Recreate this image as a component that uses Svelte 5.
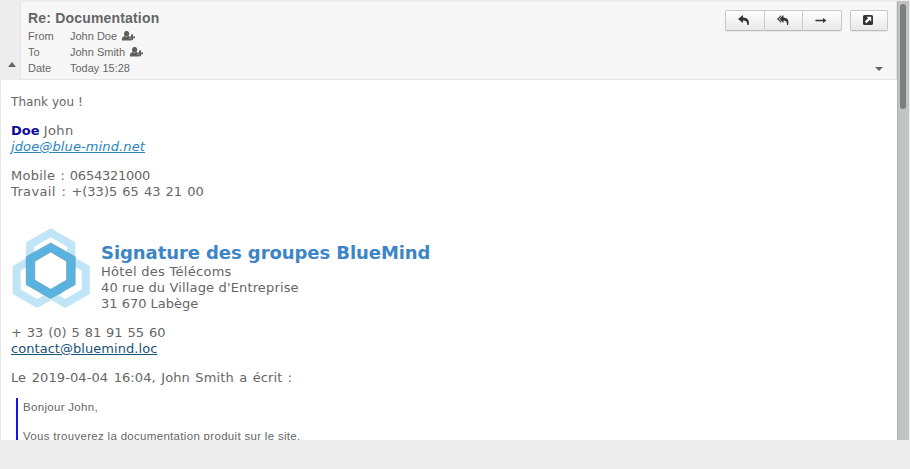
<script>
  const headers = [
    { label: 'From', value: 'John Doe', contact: true },
    { label: 'To', value: 'John Smith', contact: true },
    { label: 'Date', value: 'Today 15:28', contact: false }
  ];
  const arrow = 'M5 0 0 4 5 8V5.6C8 5.5 9.4 6.8 9.3 10H10.6C12 5.5 9.5 2.4 5 2.4Z';
</script>

<div class="app">
  <div class="viewer">
    <main>
      <header>
        <div class="gutter"><svg width="8" height="5" viewBox="0 0 8 5"><path d="M4 0 8 5H0Z" fill="#666" /></svg></div>
        <div class="summary">
          <div class="info">
            <h1>Re: Documentation</h1>
            {#each headers as h}
              <div class="row">
                <span class="label">{h.label}</span><span>{h.value}</span>
                {#if h.contact}
                  <svg class="contact" width="13" height="10" viewBox="0 0 13 10" fill="#5e5e5e">
                    <ellipse cx="4.6" cy="2.7" rx="2.6" ry="2.8" />
                    <path d="M0 9.6V7.5Q0 5.8 2.6 5Q4.5 6.5 6.4 5L7.3 5.3V7.5H9V9.6Z" />
                    <path d="M9.2 3.2H11v2.3h2V7.2h-2v2.1H9.2V7.2H7.3V5.5h1.9Z" />
                  </svg>
                {/if}
              </div>
            {/each}
          </div>
          <div class="side">
            <div class="actions">
              <div class="group">
                <button aria-label="Reply"><svg width="12" height="11" viewBox="0 0 12 11"><path d={arrow} /></svg></button>
                <button aria-label="Reply all"><svg width="12" height="11" viewBox="0 0 12 11"><path d="M6.5 0 2.5 4l4 4V5.6c2.6 0 3.6 1.5 3.5 4.4H11C12.4 5.5 10.5 2.5 6.5 2.4Z" /><path d="M4.2 0 0 4l4.2 4V6.6L1.6 4l2.6-2.6Z" /></svg></button>
                <button aria-label="Forward"><svg width="12" height="11" viewBox="0 0 12 11"><path d="M.5 4.8H8V3l3.5 2.5L8 8V6.2H.5Z" /></svg></button>
              </div>
              <button class="open" aria-label="Open in window"><svg width="10" height="10" viewBox="0 0 10 10"><rect width="10" height="10" rx="1.6" /><path d="M3.6 1.8h4.6v4.6L6.7 4.9 3.4 8.2 1.8 6.6 5.1 3.3Z" fill="#fff" /></svg></button>
            </div>
            <svg class="more" width="8" height="4" viewBox="0 0 8 4"><path d="M0 0H8L4 4Z" fill="#666" /></svg>
          </div>
        </div>
      </header>
      <article>
        <p class="thanks">Thank you !</p>
        <p><b>Doe</b> <span class="name">John</span><br /><a class="mail" href="#mail">jdoe@blue-mind.net</a></p>
        <p><span class="mobile"><span class="caption">Mobile :</span> 0654321000</span><br /><span class="work"><span class="caption">Travail :</span> +(33)5 65 43 21 00</span></p>
        <section class="signature">
          <svg class="logo" width="80" height="82" viewBox="11 227 80 82">
            <g fill="#bfe5f6">
              {#each [[50.7, 256.3], [37.2, 280], [65.2, 280]] as [x, y]}
                <path transform="translate({x} {y})" fill-rule="evenodd" d="M0-28 24.6-14V14L0 28-24.6 14V-14ZM0-19-16.5-9.5V9.5L0 19 16.5 9.5V-9.5Z" />
              {/each}
            </g>
            <path d="M50.7 251.9 66.7 261.2V280.2L50.7 289.5 34.7 280.2V261.2Z" fill="#fff" />
            <path transform="translate(50.7 270.7)" fill-rule="evenodd" d="M0-27.8 24.5-14V14L0 27.8-24.5 14V-14ZM0-18.6-15.9-9.4V9.4L0 18.6 15.9 9.4V-9.4Z" fill="#58b3e0" stroke="#6f97a9" stroke-width=".6" />
          </svg>
          <div>
            <h2>Signature des groupes BlueMind</h2>
            <span class="hotel">Hôtel des Télécoms</span><br /><span class="street">40 rue du Village d'Entreprise</span><br />31 670 Labège
          </div>
        </section>
        <p><span class="phone">+ 33 (0) 5 81 91 55 60</span><br /><a class="site" href="#contact">contact@bluemind.loc</a></p>
        <p class="intro">Le 2019-04-04 16:04, John Smith a écrit :</p>
        <blockquote><p>Bonjour John,</p><p>Vous trouverez la documentation produit sur le site.</p></blockquote>
      </article>
    </main>
    <div class="scroll"><div class="thumb"></div></div>
  </div>
</div>

<style>
  :global(body) { margin: 0; background: #ededed; }
  .app { width: 910px; height: 469px; background: #ededed; overflow: hidden; color: #666; font: 11px/16px "Liberation Sans", Arial, sans-serif; }
  .viewer { display: flex; height: 439px; padding-top: 1px; }
  main { flex: 1; overflow: hidden; height: 439px; }
  header { display: flex; height: 79px; box-sizing: border-box; }
  .gutter { width: 20px; padding: 61px 0 0 8px; box-sizing: border-box; line-height: 0; }
  .summary { flex: 1; display: flex; justify-content: space-between; box-sizing: border-box; margin-top: 1px; border: solid #e5e5e5; border-width: 0 1px 1px; background: #f7f7f7; }
  .info { padding: 8px 0 0 7px; }
  h1 { margin: 0 0 1px; font-size: 14px; line-height: 17px; letter-spacing: .18px; }
  .row { display: flex; height: 16px; }
  .label { width: 42px; }
  .contact { margin: 3px 0 0 4.5px; }
  .side { display: flex; flex-direction: column; align-items: flex-end; padding: 8px 8px 0 0; }
  .actions { display: flex; gap: 8px; }
  .group { display: flex; }
  button { box-sizing: border-box; width: 39px; height: 21px; padding: 0 2px 1px 0; display: flex; align-items: center; justify-content: center; border: 1px solid #c8c8c8; border-bottom-color: #bbb; background: linear-gradient(#fff, #e8e8e8); box-shadow: 0 1px 1px #e8e8e8; fill: #333; }
  .group button + button { border-left: 0; }
  .group button:first-child { width: 40px; border-radius: 2px 0 0 2px; }
  .group button:nth-child(2) { width: 38px; }
  .group button:last-child { border-radius: 0 2px 2px 0; }
  button.open { width: 38px; border-radius: 2px; }
  .more { margin: 36px 5px 0 0; }
  article { height: 360px; box-sizing: border-box; overflow: hidden; border-left: 1px solid #e8e8e8; background: #fff; padding: 14px 10px 0; font: 13px/16px "DejaVu Sans", Verdana, sans-serif; white-space: nowrap; }
  p { margin: 0 0 13px; }
  .thanks { font-size: 12px; letter-spacing: .05px; }
  b { color: #0b0b9c; }
  a { color: #1b5278; }
  .name { letter-spacing: .4px; }
  .mail { color: #2785bb; font-style: italic; letter-spacing: .12px; }
  .caption { letter-spacing: .25px; word-spacing: .9px; }
  .mobile { letter-spacing: -.25px; word-spacing: .9px; }
  .work { word-spacing: .95px; }
  .work .caption { letter-spacing: .35px; word-spacing: 1.4px; }
  .hotel { letter-spacing: .28px; }
  .street { letter-spacing: .15px; }
  .phone { word-spacing: .75px; }
  .site { letter-spacing: .05px; }
  .intro { letter-spacing: .1px; word-spacing: 1.2px; }
  .signature { display: flex; gap: 10px; margin: 27px 0 13px; height: 85px; }
  .signature > div { padding-top: 15px; }
  h2 { margin: 0; color: #3d85c6; font-size: 18px; line-height: 21px; padding-bottom: 1px; letter-spacing: -.07px; }
  blockquote { margin: -1px 0 0 5px; padding: 1px 0 0 5px; border-left: 2px solid #1414e8; font: 11.5px/16px "Liberation Sans", Arial, sans-serif; letter-spacing: .31px; }
  .scroll { width: 12px; margin-right: 1px; box-sizing: border-box; border-left: 1px solid #aeb0af; background: #c2c4c3; padding: 3px 3px 0 2px; }
  .thumb { width: 6px; height: 105px; border-radius: 3px; background: #7b807f; }
</style>
